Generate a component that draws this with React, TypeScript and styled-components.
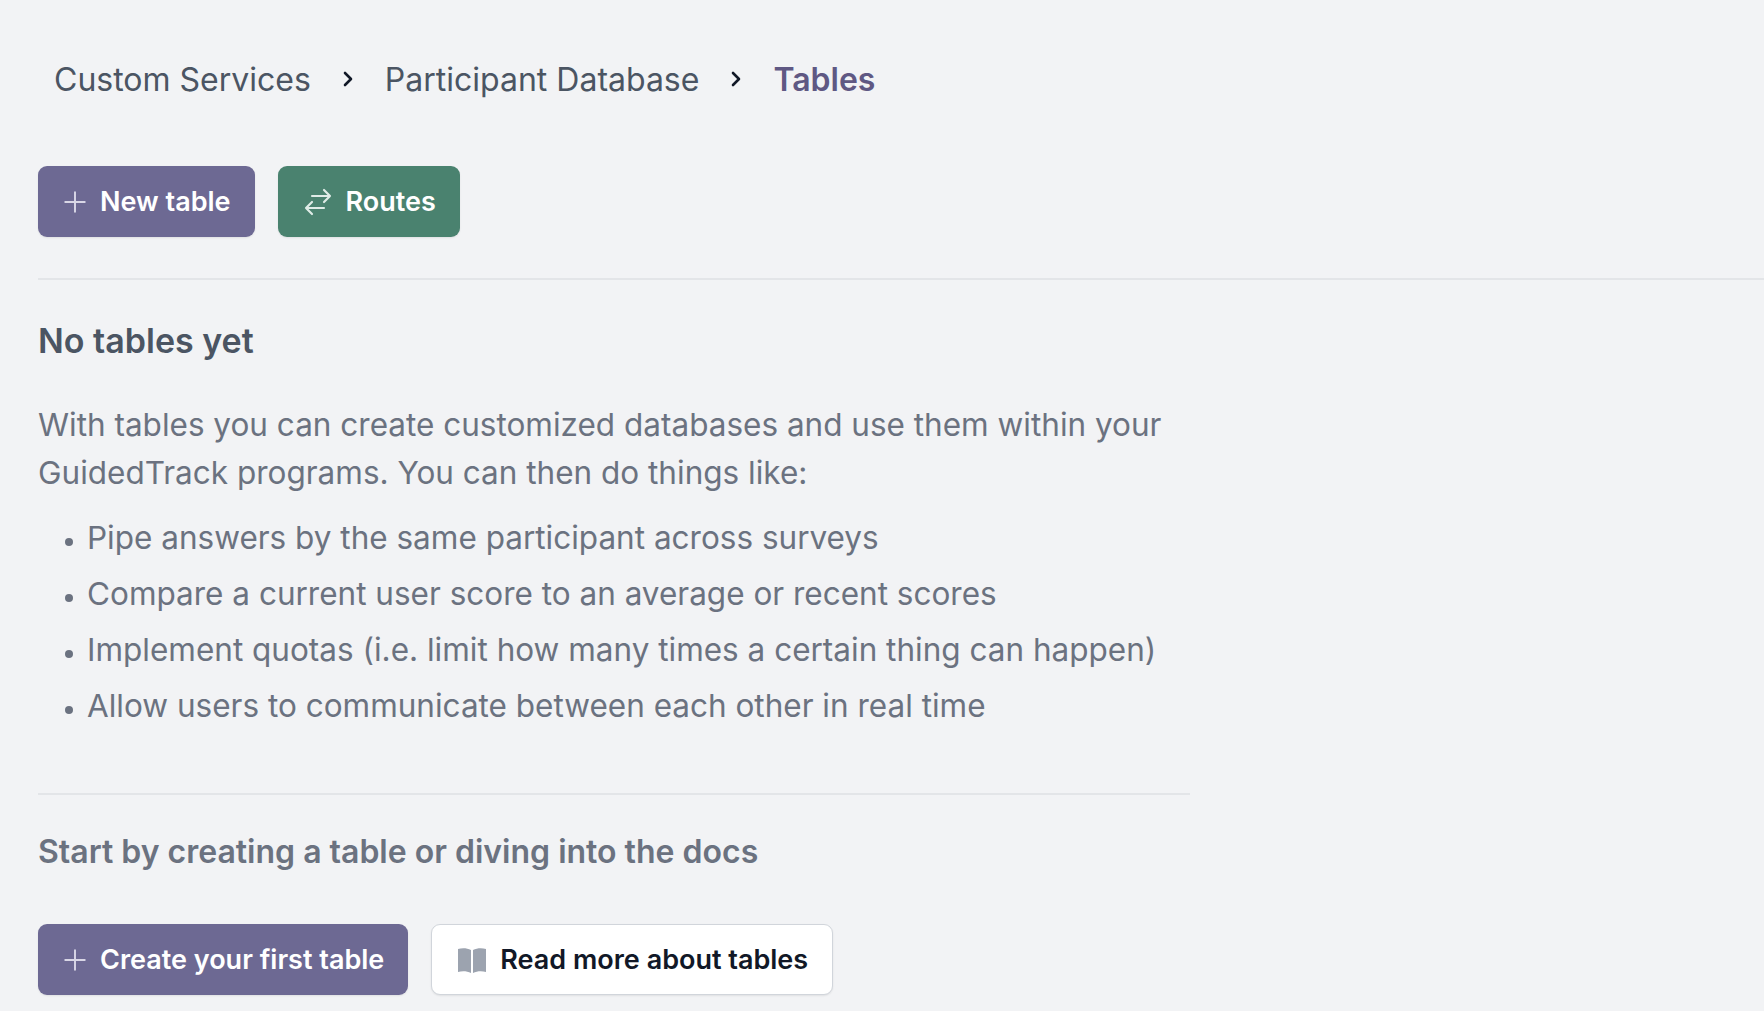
import React from "react";
import styled, { createGlobalStyle } from "styled-components";

const Global = createGlobalStyle`
  html, body { margin: 0; padding: 0; background: #f2f3f5; }
  body { font-family: Inter, "Noto Sans", sans-serif; }
`;

const Page = styled.div`
  padding: 55px 0 0 38px;
  min-height: 1011px;
  box-sizing: border-box;
`;

const Crumbs = styled.nav`
  display: flex;
  align-items: center;
  gap: 30px;
  height: 48px;
  margin-left: 16px;
  font-size: 32px;
  color: #4b5563;
`;

const Crumb = styled.span<{ $active?: boolean }>`
  color: ${(p) => (p.$active ? "#5f5883" : "#4b5563")};
  font-weight: ${(p) => (p.$active ? 600 : 400)};
`;

const Row = styled.div<{ $mt: number }>`
  display: flex;
  gap: 23px;
  margin-top: ${(p) => p.$mt}px;
`;

const Button = styled.button<{ $variant: "purple" | "green" | "white" }>`
  display: flex;
  align-items: center;
  gap: 12px;
  height: 71px;
  padding: 0 24px;
  border-radius: 9px;
  font-family: Inter, sans-serif;
  font-size: 27px;
  font-weight: 600;
  cursor: pointer;
  box-sizing: border-box;
  border: ${(p) => (p.$variant === "white" ? "1.5px solid #d1d5db" : "none")};
  background: ${(p) =>
    p.$variant === "purple" ? "#6d6993" : p.$variant === "green" ? "#4a826f" : "#ffffff"};
  color: ${(p) => (p.$variant === "white" ? "#111827" : "#ffffff")};
  box-shadow: 0 1px 2px rgba(0, 0, 0, 0.08);
`;

const Divider = styled.hr<{ $mt: number; $w?: number }>`
  border: none;
  border-top: 2px solid #e3e5e8;
  margin: ${(p) => p.$mt}px 0 0;
  width: ${(p) => (p.$w ? `${p.$w}px` : "auto")};
`;

const Heading = styled.h2`
  margin: 37px 0 0;
  font-size: 34px;
  line-height: 48px;
  font-weight: 600;
  color: #4b5563;
`;

const Para = styled.p`
  margin: 36px 0 0;
  width: 1160px;
  font-size: 31.5px;
  line-height: 48px;
  color: #6b7280;
`;

const List = styled.ul`
  margin: 17px 0 0;
  padding: 0 0 0 49px;
  display: flex;
  flex-direction: column;
  gap: 8px;
  font-size: 31.5px;
  line-height: 48px;
  color: #6b7280;
  li::marker { font-size: 24px; }
`;

const Sub = styled.h3`
  margin: 33px 0 0;
  font-size: 32px;
  line-height: 48px;
  font-weight: 600;
  color: #6b7280;
`;

const Chevron = () => (
  <svg width="14" height="20" viewBox="0 0 14 20">
    <path d="M4 4l6 6-6 6" fill="none" stroke="#111827" strokeWidth="2.6" strokeLinecap="round" strokeLinejoin="round" />
  </svg>
);

const Plus = () => (
  <svg width="26" height="26" viewBox="0 0 24 24">
    <path d="M12 3v18M3 12h18" stroke="#d9d7e6" strokeWidth="1.8" strokeLinecap="round" />
  </svg>
);

const Arrows = () => (
  <svg width="32" height="32" viewBox="0 0 24 24" fill="none" stroke="#dfece7" strokeWidth="1.6" strokeLinecap="round" strokeLinejoin="round">
    <path d="M7.5 21 3 16.5m0 0L7.5 12M3 16.5h13.5m0-13.5L21 7.5m0 0L16.5 12M21 7.5H7.5" />
  </svg>
);

const Book = () => (
  <svg width="32" height="28" viewBox="0 0 32 28">
    <path d="M2 3c4-1 9-1 13 1v23c-4-2-9-2-13-1z" fill="#9ca3af" />
    <path d="M30 3c-4-1-9-1-13 1v23c4-2 9-2 13-1z" fill="#9ca3af" />
  </svg>
);

export default function App() {
  return (
    <>
      <Global />
      <Page>
        <Crumbs>
          <Crumb>Custom Services</Crumb>
          <Chevron />
          <Crumb>Participant Database</Crumb>
          <Chevron />
          <Crumb $active>Tables</Crumb>
        </Crumbs>
        <Row $mt={63}>
          <Button $variant="purple"><Plus />New table</Button>
          <Button $variant="green"><Arrows />Routes</Button>
        </Row>
        <Divider $mt={41} />
        <Heading>No tables yet</Heading>
        <Para>
          With tables you can create customized databases and use them within your
          GuidedTrack programs. You can then do things like:
        </Para>
        <List>
          <li>Pipe answers by the same participant across surveys</li>
          <li>Compare a current user score to an average or recent scores</li>
          <li>Implement quotas (i.e. limit how many times a certain thing can happen)</li>
          <li>Allow users to communicate between each other in real time</li>
        </List>
        <Divider $mt={63} $w={1152} />
        <Sub>Start by creating a table or diving into the docs</Sub>
        <Row $mt={48}>
          <Button $variant="purple"><Plus />Create your first table</Button>
          <Button $variant="white"><Book />Read more about tables</Button>
        </Row>
      </Page>
    </>
  );
}
